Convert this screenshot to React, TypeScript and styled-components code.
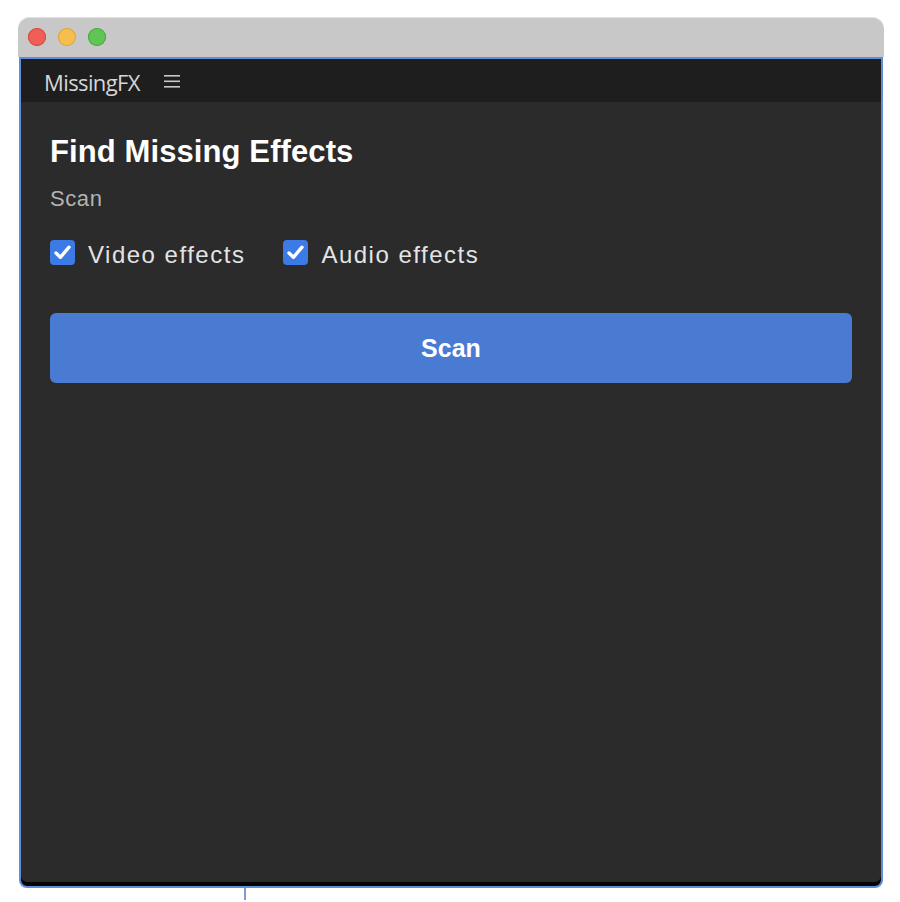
import styled, { createGlobalStyle } from 'styled-components';

const GlobalStyle = createGlobalStyle`
  body {
    margin: 0;
    background: #ffffff;
    font-family: 'Liberation Sans', Arial, sans-serif;
  }
`;

const Page = styled.div`
  padding: 17px 0 0 18px;
  width: 866px;
`;

const TitleBar = styled.div`
  height: 40px;
  background: #c8c8c8;
  border-radius: 12px 12px 0 0;
  display: flex;
  align-items: center;
  gap: 12px;
  padding-left: 10px;
  box-sizing: border-box;
  box-shadow: inset 0 1px 0 #e2e2e2;
`;

const Light = styled.span<{ $color: string; $edge: string }>`
  width: 18px;
  height: 18px;
  border-radius: 50%;
  background: ${(p) => p.$color};
  box-shadow: inset 0 0 0 1px ${(p) => p.$edge};
`;

const Panel = styled.div`
  margin: 0 1px;
  height: 831px;
  box-sizing: border-box;
  border: 2px solid #5f8ddb;
  border-radius: 0 0 8px 8px;
  background: #2b2b2b;
  display: flex;
  flex-direction: column;
  overflow: hidden;
  box-shadow: inset 0 -4px 0 #050505;
`;

const Header = styled.div`
  height: 43px;
  background: #1e1e1e;
  display: flex;
  align-items: center;
  padding-left: 23px;
  gap: 23px;
  flex-shrink: 0;
`;

const AppName = styled.span`
  font-family: 'Open Sans', 'Noto Sans', sans-serif;
  font-size: 22px;
  letter-spacing: -0.6px;
  color: #d6d6d6;
  line-height: 26px;
  padding-top: 2px;
`;

const Content = styled.div`
  padding: 30px 29px 0 29px;
  display: flex;
  flex-direction: column;
`;

const Title = styled.h1`
  margin: 0;
  font-size: 31px;
  font-weight: 700;
  color: #ffffff;
  line-height: 40px;
  letter-spacing: 0.1px;
`;

const Subtitle = styled.div`
  margin-top: 14px;
  font-size: 22px;
  color: #b3b3b3;
  line-height: 26px;
  letter-spacing: 0.6px;
`;

const Options = styled.div`
  display: flex;
  align-items: center;
  gap: 38px;
  margin-top: 26px;
`;

const Option = styled.label`
  display: flex;
  align-items: center;
  gap: 13px;
  font-size: 24px;
  color: #e4e4e4;
  line-height: 28px;
  letter-spacing: 1.5px;
`;

const OptionText = styled.span`
  margin: 3px 0 -3px;
`;

const Box = styled.span`
  width: 25px;
  height: 25px;
  border-radius: 4px;
  background: #3c7be6;
  display: flex;
  align-items: center;
  justify-content: center;
  flex-shrink: 0;
`;

const ScanButton = styled.button`
  margin-top: 47px;
  height: 70px;
  border: none;
  border-radius: 6px;
  background: #4a7bd3;
  color: #ffffff;
  font-family: 'Liberation Sans', Arial, sans-serif;
  font-size: 25px;
  font-weight: 700;
`;

const Tick = styled.div`
  margin-left: 226px;
  width: 2px;
  height: 12px;
  background: #7b9bd6;
`;

const Check = () => (
  <Box>
    <svg width="21" height="21" viewBox="0 0 21 21">
      <path d="M4 11 L8.4 15.3 L17 5.2" fill="none" stroke="#ffffff" strokeWidth="3.4" strokeLinecap="round" strokeLinejoin="round" />
    </svg>
  </Box>
);

const Menu = () => (
  <svg width="18" height="16" viewBox="0 0 18 16">
    <rect x="1" y="2" width="16" height="1.6" fill="#c8c8c8" />
    <rect x="1" y="7.5" width="16" height="1.6" fill="#c8c8c8" />
    <rect x="1" y="13" width="16" height="1.6" fill="#c8c8c8" />
  </svg>
);

export default function App() {
  return (
    <>
      <GlobalStyle />
      <Page>
        <TitleBar>
          <Light $color="#ee5f57" $edge="#d5473f" />
          <Light $color="#f6be4f" $edge="#dca43a" />
          <Light $color="#60c554" $edge="#4aa83e" />
        </TitleBar>
        <Panel>
          <Header>
            <AppName>MissingFX</AppName>
            <Menu />
          </Header>
          <Content>
            <Title>Find Missing Effects</Title>
            <Subtitle>Scan</Subtitle>
            <Options>
              <Option>
                <Check />
                <OptionText>Video effects</OptionText>
              </Option>
              <Option>
                <Check />
                <OptionText>Audio effects</OptionText>
              </Option>
            </Options>
            <ScanButton>Scan</ScanButton>
          </Content>
        </Panel>
        <Tick />
      </Page>
    </>
  );
}
